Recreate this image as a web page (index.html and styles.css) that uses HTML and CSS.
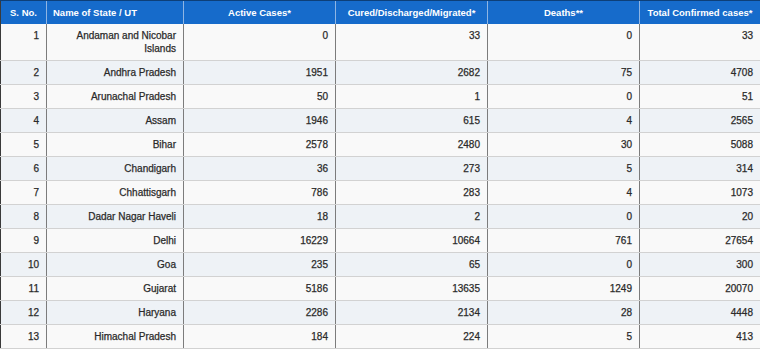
FILE: index.html
```html
<!DOCTYPE html>
<html lang="en">

<head>
    <meta charset="UTF-8" />
    <title>State-wise Cases</title>
    <link rel="stylesheet" href="styles.css">
</head>

<body>
    <table class="state-table">
        <colgroup>
            <col class="col-sno">
            <col class="col-name">
            <col class="col-num">
            <col class="col-num">
            <col class="col-num">
            <col class="col-total">
        </colgroup>
        <thead>
            <tr>
                <th class="center">S. No.</th>
                <th class="left">Name of State / UT</th>
                <th>Active Cases*</th>
                <th>Cured/Discharged/Migrated*</th>
                <th>Deaths**</th>
                <th>Total Confirmed cases*</th>
            </tr>
        </thead>
        <tbody>
            <tr><td>1</td><td>Andaman and Nicobar Islands</td><td>0</td><td>33</td><td>0</td><td>33</td></tr>
            <tr><td>2</td><td>Andhra Pradesh</td><td>1951</td><td>2682</td><td>75</td><td>4708</td></tr>
            <tr><td>3</td><td>Arunachal Pradesh</td><td>50</td><td>1</td><td>0</td><td>51</td></tr>
            <tr><td>4</td><td>Assam</td><td>1946</td><td>615</td><td>4</td><td>2565</td></tr>
            <tr><td>5</td><td>Bihar</td><td>2578</td><td>2480</td><td>30</td><td>5088</td></tr>
            <tr><td>6</td><td>Chandigarh</td><td>36</td><td>273</td><td>5</td><td>314</td></tr>
            <tr><td>7</td><td>Chhattisgarh</td><td>786</td><td>283</td><td>4</td><td>1073</td></tr>
            <tr><td>8</td><td>Dadar Nagar Haveli</td><td>18</td><td>2</td><td>0</td><td>20</td></tr>
            <tr><td>9</td><td>Delhi</td><td>16229</td><td>10664</td><td>761</td><td>27654</td></tr>
            <tr><td>10</td><td>Goa</td><td>235</td><td>65</td><td>0</td><td>300</td></tr>
            <tr><td>11</td><td>Gujarat</td><td>5186</td><td>13635</td><td>1249</td><td>20070</td></tr>
            <tr><td>12</td><td>Haryana</td><td>2286</td><td>2134</td><td>28</td><td>4448</td></tr>
            <tr><td>13</td><td>Himachal Pradesh</td><td>184</td><td>224</td><td>5</td><td>413</td></tr>
        </tbody>
    </table>
</body>

</html>
```

FILE: styles.css
```css
body {
    margin: 0;
    font-family: "Liberation Sans", Arial, sans-serif;
    background: #ffffff;
}

.state-table {
    width: 760px;
    table-layout: fixed;
    border-collapse: collapse;
    border-left: 1px solid #3a3a3a;
    border-right: 1px solid #3a3a3a;
}

.col-sno {
    width: 46px;
}

.col-name {
    width: 137px;
}

.col-num {
    width: 152px;
}

.col-total {
    width: 121px;
}

.state-table th {
    height: 23px;
    padding: 0 6px;
    background: #166bcb;
    color: #ffffff;
    font-size: 9.5px;
    font-weight: bold;
    text-align: center;
    border-top: 1px solid #0d3f78;
    border-left: 1px solid #8fb5e3;
    white-space: nowrap;
}

.state-table th:first-child {
    border-left: none;
}

.state-table th.left {
    text-align: left;
}

.state-table td {
    padding: 5px 7px 5px 6px;
    font-size: 10px;
    line-height: 13px;
    color: #2a2a2a;
    -webkit-text-stroke: 0.25px #2a2a2a;
    text-align: right;
    vertical-align: top;
    border-left: 1px solid #7c7c7c;
    border-bottom: 1px solid #d2d2d2;
}

.state-table td:first-child {
    border-left: none;
}

.state-table tbody tr:nth-child(odd) td {
    background: #f9f9f9;
}

.state-table tbody tr:nth-child(even) td {
    background: #eef2f6;
}
```
